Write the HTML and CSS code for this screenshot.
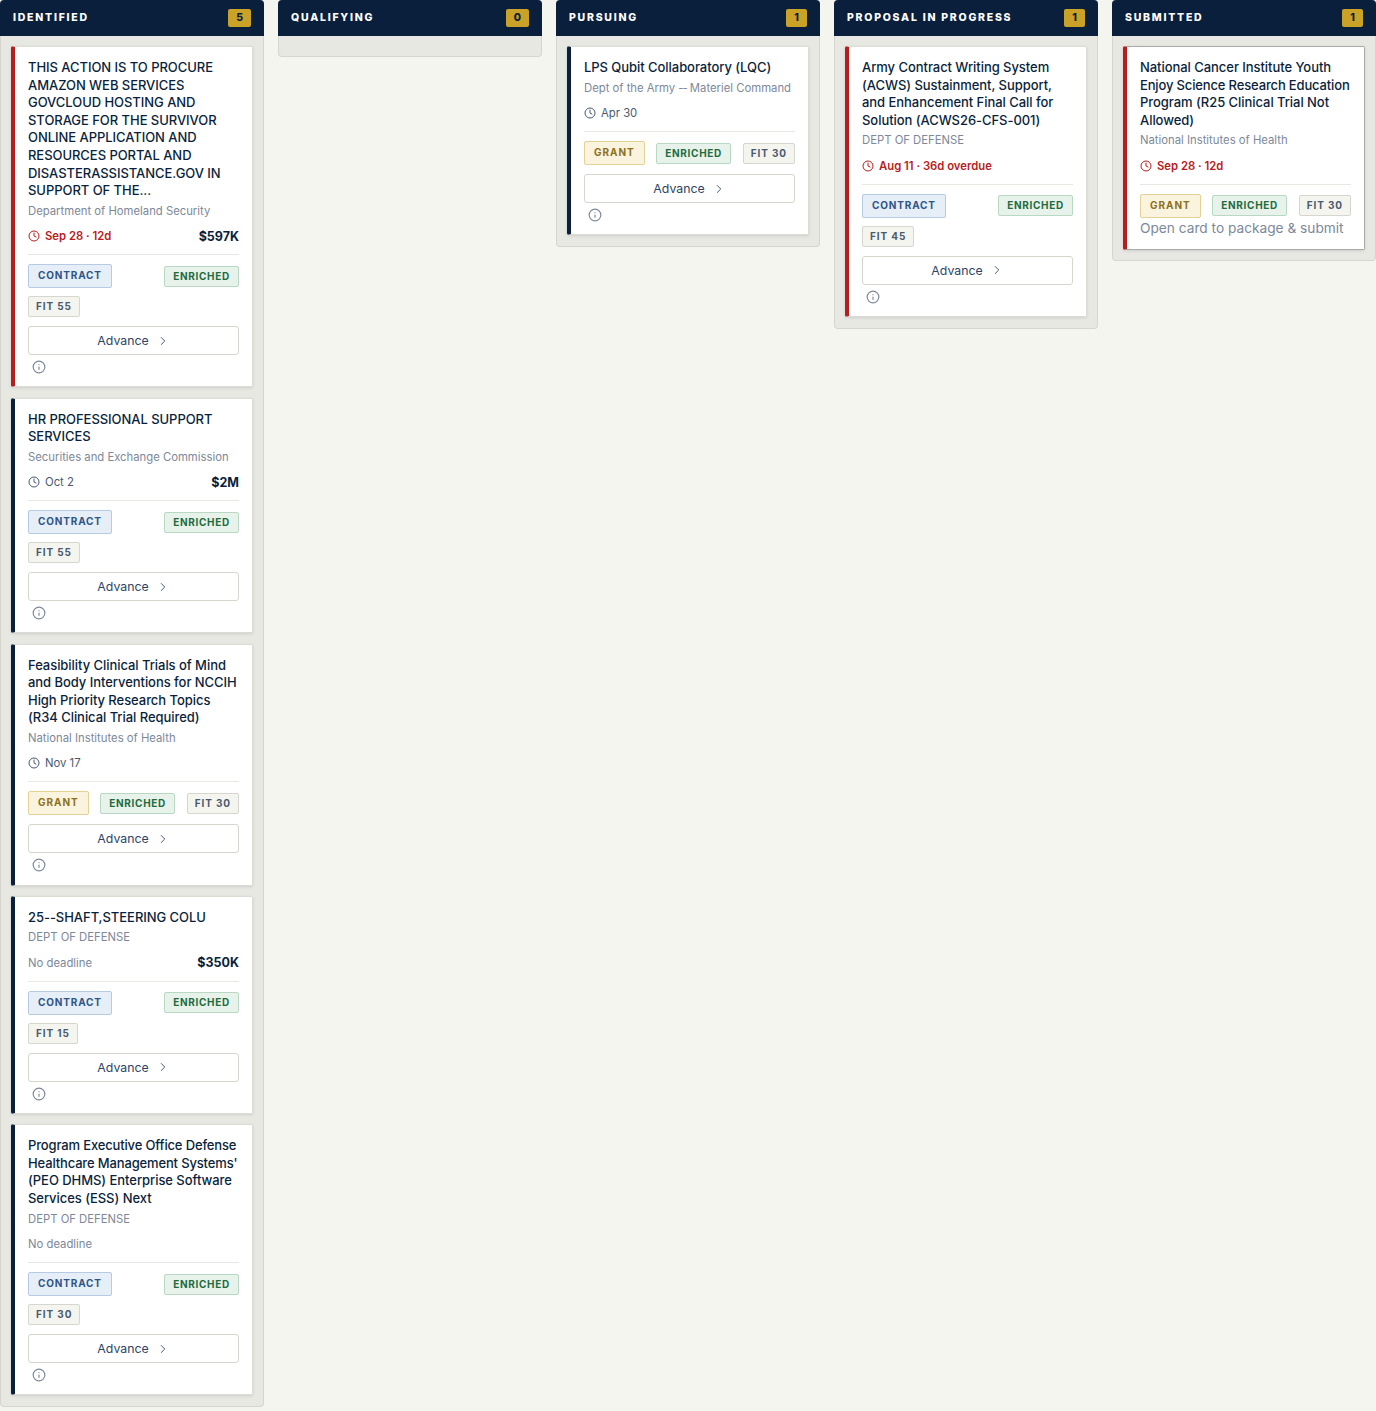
FILE: index.html
```html
<!DOCTYPE html>
<html lang="en">
<head>
  <meta charset="UTF-8" />
  <meta name="viewport" content="width=device-width, initial-scale=1.0" />
  <title>Pipeline</title>
  <link rel="stylesheet" href="styles.css">
</head>
<body>
  <svg class="defs" width="0" height="0">
    <symbol id="clock" viewBox="0 0 24 24"><circle cx="12" cy="12" r="10" fill="none" stroke="currentColor" stroke-width="2"/><path d="M12 6v6l4 2" fill="none" stroke="currentColor" stroke-width="2" stroke-linecap="round" stroke-linejoin="round"/></symbol>
    <symbol id="info" viewBox="0 0 24 24"><circle cx="12" cy="12" r="10" fill="none" stroke="currentColor" stroke-width="2"/><path d="M12 16v-4M12 8h.01" fill="none" stroke="currentColor" stroke-width="2" stroke-linecap="round"/></symbol>
    <symbol id="chevron" viewBox="0 0 24 24"><path d="M9 18l6-6-6-6" fill="none" stroke="currentColor" stroke-width="1.5" stroke-linecap="round" stroke-linejoin="round"/></symbol>
  </svg>

  <div class="board">
    <!-- Identified -->
    <section class="column">
      <header class="column-head"><span class="column-title">IDENTIFIED</span><span class="count">5</span></header>
      <div class="column-body">
        <article class="card urgent">
          <h3>THIS ACTION IS TO PROCURE AMAZON WEB SERVICES GOVCLOUD HOSTING AND STORAGE FOR THE SURVIVOR ONLINE APPLICATION AND RESOURCES PORTAL AND DISASTERASSISTANCE.GOV IN SUPPORT OF THE...</h3>
          <p class="agency">Department of Homeland Security</p>
          <div class="meta"><span class="due late"><svg class="icon"><use href="#clock"/></svg>Sep 28 · 12d</span><span class="value">$597K</span></div>
          <div class="tags">
            <span class="tag contract">CONTRACT</span><span class="tag enriched">ENRICHED</span><span class="tag fit">FIT 55</span>
          </div>
          <button class="advance">Advance<svg class="chevron"><use href="#chevron"/></svg></button>
          <svg class="info"><use href="#info"/></svg>
        </article>
        <article class="card">
          <h3>HR PROFESSIONAL SUPPORT SERVICES</h3>
          <p class="agency">Securities and Exchange Commission</p>
          <div class="meta"><span class="due"><svg class="icon"><use href="#clock"/></svg>Oct 2</span><span class="value">$2M</span></div>
          <div class="tags">
            <span class="tag contract">CONTRACT</span><span class="tag enriched">ENRICHED</span><span class="tag fit">FIT 55</span>
          </div>
          <button class="advance">Advance<svg class="chevron"><use href="#chevron"/></svg></button>
          <svg class="info"><use href="#info"/></svg>
        </article>
        <article class="card">
          <h3>Feasibility Clinical Trials of Mind and Body Interventions for NCCIH High Priority Research Topics (R34 Clinical Trial Required)</h3>
          <p class="agency">National Institutes of Health</p>
          <div class="meta"><span class="due"><svg class="icon"><use href="#clock"/></svg>Nov 17</span></div>
          <div class="tags">
            <span class="tag grant">GRANT</span><span class="tag enriched">ENRICHED</span><span class="tag fit">FIT 30</span>
          </div>
          <button class="advance">Advance<svg class="chevron"><use href="#chevron"/></svg></button>
          <svg class="info"><use href="#info"/></svg>
        </article>
        <article class="card">
          <h3>25--SHAFT,STEERING COLU</h3>
          <p class="agency">DEPT OF DEFENSE</p>
          <div class="meta"><span class="due none">No deadline</span><span class="value">$350K</span></div>
          <div class="tags">
            <span class="tag contract">CONTRACT</span><span class="tag enriched">ENRICHED</span><span class="tag fit">FIT 15</span>
          </div>
          <button class="advance">Advance<svg class="chevron"><use href="#chevron"/></svg></button>
          <svg class="info"><use href="#info"/></svg>
        </article>
        <article class="card">
          <h3><span class="tight">Program Executive Office Defense</span> <span class="tight">Healthcare Management Systems'</span> (PEO DHMS) Enterprise Software Services (ESS) Next</h3>
          <p class="agency">DEPT OF DEFENSE</p>
          <div class="meta"><span class="due none">No deadline</span></div>
          <div class="tags">
            <span class="tag contract">CONTRACT</span><span class="tag enriched">ENRICHED</span><span class="tag fit">FIT 30</span>
          </div>
          <button class="advance">Advance<svg class="chevron"><use href="#chevron"/></svg></button>
          <svg class="info"><use href="#info"/></svg>
        </article>
      </div>
    </section>

    <!-- Qualifying -->
    <section class="column">
      <header class="column-head"><span class="column-title">QUALIFYING</span><span class="count">0</span></header>
      <div class="column-body empty"></div>
    </section>

    <!-- Pursuing -->
    <section class="column">
      <header class="column-head"><span class="column-title">PURSUING</span><span class="count">1</span></header>
      <div class="column-body">
        <article class="card">
          <h3>LPS Qubit Collaboratory (LQC)</h3>
          <p class="agency">Dept of the Army <span class="dash">--</span> Materiel Command</p>
          <div class="meta"><span class="due"><svg class="icon"><use href="#clock"/></svg>Apr 30</span></div>
          <div class="tags">
            <span class="tag grant">GRANT</span><span class="tag enriched">ENRICHED</span><span class="tag fit">FIT 30</span>
          </div>
          <button class="advance">Advance<svg class="chevron"><use href="#chevron"/></svg></button>
          <svg class="info"><use href="#info"/></svg>
        </article>
      </div>
    </section>

    <!-- Proposal in progress -->
    <section class="column">
      <header class="column-head"><span class="column-title">PROPOSAL IN PROGRESS</span><span class="count">1</span></header>
      <div class="column-body">
        <article class="card urgent">
          <h3>Army Contract Writing System (ACWS) Sustainment, Support, and Enhancement Final Call for Solution (ACWS26-CFS-001)</h3>
          <p class="agency">DEPT OF DEFENSE</p>
          <div class="meta"><span class="due late"><svg class="icon"><use href="#clock"/></svg>Aug 11 · 36d overdue</span></div>
          <div class="tags">
            <span class="tag contract">CONTRACT</span><span class="tag enriched">ENRICHED</span><span class="tag fit">FIT 45</span>
          </div>
          <button class="advance">Advance<svg class="chevron"><use href="#chevron"/></svg></button>
          <svg class="info"><use href="#info"/></svg>
        </article>
      </div>
    </section>

    <!-- Submitted -->
    <section class="column">
      <header class="column-head"><span class="column-title">SUBMITTED</span><span class="count">1</span></header>
      <div class="column-body">
        <article class="card urgent selected">
          <h3>National Cancer Institute Youth <span class="tight">Enjoy Science Research Education</span> Program (R25 Clinical Trial Not Allowed)</h3>
          <p class="agency">National Institutes of Health</p>
          <div class="meta"><span class="due late"><svg class="icon"><use href="#clock"/></svg>Sep 28 · 12d</span></div>
          <div class="tags">
            <span class="tag grant">GRANT</span><span class="tag enriched">ENRICHED</span><span class="tag fit">FIT 30</span>
          </div>
          <p class="hint">Open card to package &amp; submit</p>
        </article>
      </div>
    </section>
  </div>
</body>
</html>
```

FILE: styles.css
```css
body {
  margin: 0;
  background: #f5f5f0;
  color: #0a1f3c;
  font-family: "Inter", "Liberation Sans", sans-serif;
}
.defs {
  position: absolute;
}
.board {
  display: grid;
  grid-template-columns: repeat(5, 264px);
  gap: 14px;
  align-items: start;
}
.column-head {
  display: flex;
  align-items: center;
  justify-content: space-between;
  height: 36px;
  padding: 0 13px;
  background: #0a1f3c;
  color: #fff;
  border-radius: 4px 4px 0 0;
  font-size: 10.5px;
  font-weight: 800;
  letter-spacing: 1.75px;
}
.column-title {
  padding-bottom: 2px;
}
.count {
  padding: 0 8px;
  height: 18px;
  line-height: 18px;
  text-align: center;
  background: #c9a227;
  color: #0a1f3c;
  border-radius: 2px;
  letter-spacing: 0;
}
.column-body {
  display: flex;
  flex-direction: column;
  gap: 10.15px;
  padding: 10px 10px 10.6px;
  background: #e8e8e3;
  border: 1px solid #d6d6ce;
  border-top: none;
  border-radius: 0 0 4px 4px;
}
.column-body.empty {
  height: 20px;
  padding: 0;
}
.card {
  display: flex;
  flex-direction: column;
  padding: 12px 13px 12.2px;
  background: #fff;
  border: 1px solid #dcdcd5;
  border-left: 4px solid #0a1f3c;
  border-radius: 2px;
  box-shadow: 0 1px 3px rgba(10, 31, 60, 0.12);
}
.card.urgent {
  border-left-color: #b91c1c;
}
.card.selected {
  border-top-color: #aaa;
  border-right-color: #aaa;
  border-bottom-color: #aaa;
}
h3 {
  margin: 0;
  font-size: 13px;
  font-weight: 500;
  line-height: 17.6px;
  letter-spacing: -0.05px;
}
.tight {
  white-space: nowrap;
  letter-spacing: -0.15px;
}
.agency {
  margin: 3px 0 0;
  font-size: 11.3px;
  line-height: 16px;
  color: #7d8899;
}
.dash {
  letter-spacing: -1px;
  word-spacing: -1px;
}
.meta {
  display: flex;
  align-items: center;
  justify-content: space-between;
  height: 18px;
  margin-top: 8.5px;
  padding-bottom: 9px;
  border-bottom: 1px solid #e8e8e3;
  font-size: 11.3px;
}
.due {
  display: flex;
  align-items: center;
  gap: 5px;
  color: #4a5a70;
}
.due.late {
  color: #b91c1c;
  font-weight: 600;
}
.due.none {
  color: #7d8899;
}
.icon {
  width: 12px;
  height: 12px;
}
.value {
  font-size: 12.5px;
  font-weight: 700;
}
.tags {
  display: flex;
  flex-wrap: wrap;
  align-items: center;
  justify-content: space-between;
  gap: 8px;
  margin-top: 9px;
}
.tag {
  padding: 0 7px;
  height: 19px;
  line-height: 19px;
  border: 1px solid;
  border-radius: 2px;
  font-size: 10px;
  font-weight: 700;
  letter-spacing: 0.9px;
}
.contract {
  padding: 0 9px;
  height: 22px;
  line-height: 21px;
  letter-spacing: 0.85px;
  background: #e6eef8;
  border-color: #b6cae4;
  color: #2f5585;
}
.grant {
  padding: 0 9px;
  height: 22px;
  line-height: 21px;
  letter-spacing: 0.95px;
  background: #faf3dd;
  border-color: #e6d194;
  color: #8f701a;
}
.enriched {
  padding: 0 8px;
  letter-spacing: 0.7px;
  background: #e6f2ea;
  border-color: #b9d8c4;
  color: #1f6b3f;
}
.fit {
  background: #f5f5f0;
  border-color: #d6d6ce;
  color: #4a5a70;
}
.advance {
  display: flex;
  align-items: center;
  justify-content: center;
  gap: 7px;
  height: 29px;
  margin-top: 9px;
  padding: 0;
  background: #fff;
  border: 1px solid #d6d6ce;
  border-radius: 3px;
  color: #2d4363;
  font-family: inherit;
  font-size: 12.3px;
}
.chevron {
  width: 14px;
  height: 14px;
}
.info {
  width: 14px;
  height: 14px;
  margin: 5px 0 0 4px;
  color: #7d8899;
}
.hint {
  margin: 0 0 -1.5px;
  font-size: 13.7px;
  line-height: 20px;
  color: #7d8899;
}
```
